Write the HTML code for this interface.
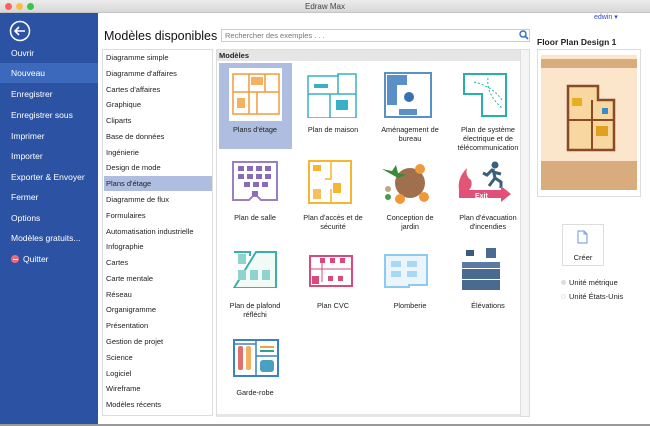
<!DOCTYPE html>
<html><head><meta charset="utf-8"><style>
*{margin:0;padding:0;box-sizing:border-box}
body{width:650px;height:426px;overflow:hidden;background:#fff;font-family:"Liberation Sans",sans-serif;position:relative;color:#222}
.a{position:absolute}
.tb{left:0;top:0;width:650px;height:13px;background:linear-gradient(#ececec,#d8d8d8);border-bottom:1px solid #c4c4c4;font-size:8px;text-align:center;line-height:13px;color:#444}
.dot{top:3px;width:7px;height:7px;border-radius:50%}
.side{left:0;top:13px;width:98px;height:413px;background:#2c53a3}
.si{left:0;width:98px;height:20px;line-height:20px;padding-left:11px;color:#fff;font-size:8.5px}
.cat{left:102px;top:49px;width:111px;height:367px;border:1px solid #ddd}
.ci{left:104px;width:108px;height:15px;line-height:15px;padding-left:2px;font-size:7.5px;color:#222}
.lbl{width:66px;text-align:center;font-size:7.3px;line-height:9px;color:#222}
</style></head><body>
<div class="a tb">Edraw Max</div>
<div class="a dot" style="left:5px;background:#fc605c"></div>
<div class="a dot" style="left:16px;background:#fdbc40"></div>
<div class="a dot" style="left:27px;background:#34c84a"></div>
<div class="a side"></div>
<svg class="a" style="left:9px;top:20px" width="22" height="22"><circle cx="11" cy="11" r="9.5" fill="none" stroke="#fff" stroke-width="1.5"/><path d="M6 11h10M10 7l-4 4 4 4" fill="none" stroke="#fff" stroke-width="1.6"/></svg>
<div class="a si" style="top:43px">Ouvrir</div>
<div class="a si" style="top:63px;background:#3d69bd">Nouveau</div>
<div class="a si" style="top:84px">Enregistrer</div>
<div class="a si" style="top:105px">Enregistrer sous</div>
<div class="a si" style="top:126px">Imprimer</div>
<div class="a si" style="top:146px">Importer</div>
<div class="a si" style="top:167px">Exporter &amp; Envoyer</div>
<div class="a si" style="top:187px">Fermer</div>
<div class="a si" style="top:208px">Options</div>
<div class="a si" style="top:228px">Modèles gratuits...</div>
<div class="a si" style="top:249px;padding-left:23px">Quitter</div>
<div class="a" style="left:11px;top:255px;width:8px;height:8px;border-radius:50%;background:#ea6b7a"><div style="margin:3.5px 1.5px;height:1px;background:#fff"></div></div>
<div class="a" style="left:594px;top:13px;font-size:7px;color:#3345d0">edwin ▾</div>
<div class="a" style="left:104px;top:29px;font-size:12.5px;color:#111">Modèles disponibles</div>
<div class="a" style="left:221px;top:29px;width:309px;height:13px;border:1px solid #ccc;font-size:7.5px;color:#777;padding-left:3px;line-height:11px">Rechercher des exemples . . .</div>
<svg class="a" style="left:519px;top:30px" width="10" height="10"><circle cx="4" cy="4" r="3" fill="none" stroke="#2b6fd0" stroke-width="1.4"/><path d="M6 6l3 3" stroke="#2b6fd0" stroke-width="1.6"/></svg>
<div class="a cat"></div>
<div class="a ci" style="top:50px">Diagramme simple</div>
<div class="a ci" style="top:66px">Diagramme d'affaires</div>
<div class="a ci" style="top:82px">Cartes d'affaires</div>
<div class="a ci" style="top:97px">Graphique</div>
<div class="a ci" style="top:113px">Cliparts</div>
<div class="a ci" style="top:129px">Base de données</div>
<div class="a ci" style="top:145px">Ingénierie</div>
<div class="a ci" style="top:160px">Design de mode</div>
<div class="a ci" style="top:176px;background:#aebde0">Plans d'étage</div>
<div class="a ci" style="top:192px">Diagramme de flux</div>
<div class="a ci" style="top:208px">Formulaires</div>
<div class="a ci" style="top:224px">Automatisation industrielle</div>
<div class="a ci" style="top:239px">Infographie</div>
<div class="a ci" style="top:255px">Cartes</div>
<div class="a ci" style="top:271px">Carte mentale</div>
<div class="a ci" style="top:287px">Réseau</div>
<div class="a ci" style="top:302px">Organigramme</div>
<div class="a ci" style="top:318px">Présentation</div>
<div class="a ci" style="top:334px">Gestion de projet</div>
<div class="a ci" style="top:350px">Science</div>
<div class="a ci" style="top:366px">Logiciel</div>
<div class="a ci" style="top:381px">Wireframe</div>
<div class="a ci" style="top:397px">Modèles récents</div>
<div class="a" style="left:216px;top:49px;width:314px;height:368px;border:1px solid #ddd"></div>
<div class="a" style="left:217px;top:50px;width:303px;height:11px;background:#e6e6e6;font-size:7.5px;font-weight:bold;line-height:11px;padding-left:2px">Modèles</div>
<div class="a" style="left:520px;top:50px;width:9px;height:366px;background:#f4f4f4;border-left:1px solid #e0e0e0"></div>
<div class="a" style="left:217px;top:414px;width:303px;height:3px;background:#e6e6e6"></div>
<div class="a" style="left:219px;top:63px;width:73px;height:86px;background:#aebde0"></div>
<div class="a" style="left:229px;top:68px;width:53px;height:53px;background:#fff"></div>
<svg class="a" style="left:231px;top:72px" width="50" height="44"><g fill="none" stroke="#f29a3c" stroke-width="1.5"><rect x="2" y="2" width="46" height="40"/><path d="M2 20h46M18 2v40M34 2v18M26 20v22"/></g><rect x="20" y="5" width="12" height="8" fill="#f5b060"/><rect x="6" y="26" width="8" height="10" fill="#f5b060"/></svg>
<svg class="a" style="left:306px;top:72px" width="52" height="46"><g fill="none" stroke="#3ab0c8" stroke-width="1.5"><path d="M2 4h30v-2h18v44H2z"/><path d="M2 22h48M24 22v24M32 2v20"/></g><rect x="8" y="12" width="14" height="4" fill="#3ab0c8"/><rect x="30" y="28" width="12" height="10" fill="#3ab0c8"/></svg>
<svg class="a" style="left:383px;top:71px" width="50" height="48"><rect x="2" y="2" width="46" height="44" fill="#fff" stroke="#5a90c6" stroke-width="2"/><path d="M4 4h20v10h-10v20h-10z" fill="#5a90c6"/><circle cx="26" cy="26" r="5" fill="#3a70b0"/><rect x="16" y="38" width="18" height="6" fill="#5a90c6"/></svg>
<svg class="a" style="left:460px;top:72px" width="50" height="46"><path d="M4 2h42v42H22V22H4z" fill="#fff" stroke="#26b0a8" stroke-width="2"/><g fill="none" stroke="#26b0a8" stroke-dasharray="2 2"><path d="M14 10q18 4 28 18M28 6q-2 16 14 30"/></g></svg>
<svg class="a" style="left:231px;top:160px" width="48" height="44"><path d="M2 2h44v38H30l-4-4h-4l-4 4H2z" fill="#fff" stroke="#9b7fc3" stroke-width="2"/><g fill="#8a6bb8"><rect x="7" y="6" width="6" height="5"/><rect x="16" y="6" width="6" height="5"/><rect x="25" y="6" width="6" height="5"/><rect x="34" y="6" width="6" height="5"/><rect x="7" y="14" width="6" height="5"/><rect x="16" y="14" width="6" height="5"/><rect x="25" y="14" width="6" height="5"/><rect x="34" y="14" width="6" height="5"/><rect x="13" y="22" width="6" height="5"/><rect x="22" y="22" width="6" height="5"/><rect x="31" y="22" width="6" height="5"/><rect x="21" y="31" width="6" height="5"/></g></svg>
<svg class="a" style="left:307px;top:159px" width="46" height="46"><rect x="2" y="2" width="42" height="42" fill="#fff" stroke="#f5b630" stroke-width="2"/><path d="M24 2v18h-6M24 30v14" stroke="#f5b630" stroke-width="1.5" fill="none"/><rect x="6" y="6" width="8" height="6" fill="#f5b630"/><rect x="26" y="24" width="8" height="10" fill="#f5b630"/><rect x="6" y="30" width="8" height="10" fill="#f5c060"/></svg>
<svg class="a" style="left:378px;top:161px" width="62" height="44"><circle cx="32" cy="22" r="15" fill="#a0704e"/><circle cx="42" cy="8" r="5" fill="#ef9a3a"/><circle cx="46" cy="36" r="5" fill="#ef9a3a"/><circle cx="22" cy="38" r="5" fill="#ef9a3a"/><path d="M4 8l10 2 4-6 2 8 8 2-8 3" fill="#3a8a3a"/><circle cx="10" cy="28" r="3" fill="#bba888"/><circle cx="10" cy="36" r="3" fill="#4a9a4a"/></svg>
<svg class="a" style="left:455px;top:160px" width="60" height="44"><path d="M4 30q-2-12 8-22q-2 8 4 12q2 6-2 10z" fill="#e25577"/><circle cx="40" cy="5" r="3.5" fill="#3b5f7a"/><path d="M38 9l-6 6 -4-2M38 9l2 9 -6 8M40 18l6 4 0 6M38 12l8 2" stroke="#3b5f7a" stroke-width="3" fill="none"/><path d="M4 30h42v-4l10 8-10 8v-4H4z" fill="#e2507a"/><text x="20" y="38" font-size="7" fill="#fff" font-weight="bold" font-family="Liberation Sans">Exit</text></svg>
<svg class="a" style="left:232px;top:250px" width="46" height="38"><path d="M2 2h16v4M24 2h20v36H2z" fill="#f2faf5" stroke="#3bb0a8" stroke-width="2"/><g fill="#8fd4cc"><rect x="6" y="4" width="8" height="10"/><rect x="6" y="20" width="8" height="10"/><rect x="18" y="20" width="8" height="10"/><rect x="30" y="20" width="8" height="10"/></g></svg>
<svg class="a" style="left:308px;top:254px" width="46" height="34"><rect x="2" y="2" width="42" height="30" fill="#fff" stroke="#d84a7a" stroke-width="2"/><path d="M2 15h42M14 8v20" stroke="#d84a7a"/><g fill="#d84a7a"><rect x="12" y="4" width="5" height="5"/><rect x="22" y="4" width="5" height="5"/><rect x="32" y="4" width="5" height="5"/><rect x="4" y="22" width="7" height="8"/><rect x="20" y="22" width="5" height="5"/><rect x="30" y="22" width="5" height="5"/></g></svg>
<svg class="a" style="left:383px;top:253px" width="46" height="36"><path d="M2 2h42v30H26v2H2z" fill="#eaf5fc" stroke="#8ccaf0" stroke-width="2"/><g fill="#a8d8f4"><rect x="8" y="8" width="10" height="6"/><rect x="24" y="8" width="10" height="6"/><rect x="8" y="18" width="10" height="6"/><rect x="24" y="18" width="10" height="6"/></g></svg>
<svg class="a" style="left:460px;top:248px" width="42" height="44"><rect x="6" y="2" width="8" height="6" fill="#3c5a80"/><rect x="26" y="0" width="10" height="10" fill="#4a6a90"/><rect x="2" y="14" width="38" height="6" fill="#5a7aa4"/><rect x="2" y="21" width="38" height="10" fill="#4a6a90"/><rect x="2" y="32" width="38" height="10" fill="#4a6a90"/></svg>
<svg class="a" style="left:232px;top:338px" width="48" height="40"><rect x="2" y="2" width="44" height="36" fill="#fff" stroke="#3b82c4" stroke-width="2"/><path d="M24 2v36M24 18h22M2 6h22" stroke="#3b82c4" stroke-width="1.5"/><rect x="6" y="8" width="5" height="24" rx="2" fill="#e07070"/><rect x="14" y="8" width="5" height="24" rx="2" fill="#f2b060"/><rect x="28" y="8" width="14" height="2" fill="#f2a040"/><rect x="28" y="12" width="14" height="2" fill="#30a090"/><rect x="28" y="22" width="14" height="12" rx="3" fill="#4aa0c0"/></svg>
<div class="a lbl" style="left:222px;top:125px">Plans d'étage</div>
<div class="a lbl" style="left:300px;top:125px">Plan de maison</div>
<div class="a lbl" style="left:377px;top:125px">Aménagement de bureau</div>
<div class="a lbl" style="left:451px;top:125px;width:74px">Plan de système électrique et de télécommunication</div>
<div class="a lbl" style="left:222px;top:213px">Plan de salle</div>
<div class="a lbl" style="left:300px;top:213px">Plan d'accès et de sécurité</div>
<div class="a lbl" style="left:377px;top:213px">Conception de jardin</div>
<div class="a lbl" style="left:451px;top:213px;width:74px">Plan d'évacuation d'incendies</div>
<div class="a lbl" style="left:222px;top:301px">Plan de plafond réfléchi</div>
<div class="a lbl" style="left:300px;top:301px">Plan CVC</div>
<div class="a lbl" style="left:377px;top:301px">Plomberie</div>
<div class="a lbl" style="left:455px;top:301px">Élévations</div>
<div class="a lbl" style="left:222px;top:388px">Garde-robe</div>
<div class="a" style="left:537px;top:37px;font-size:8.5px;font-weight:bold">Floor Plan Design 1</div>
<div class="a" style="left:537px;top:49px;width:104px;height:148px;border:1px solid #ddd"></div>
<div class="a" style="left:541px;top:55px;width:96px;height:135px;background:#fbe6cc"></div>
<div class="a" style="left:541px;top:59px;width:96px;height:9px;background:#d8ac7c"></div>
<div class="a" style="left:541px;top:161px;width:96px;height:29px;background:#d8ac7c"></div>
<svg class="a" style="left:558px;top:80px" width="66" height="72"><path d="M10 6h30v14h16v50H10z" fill="#f8d8a0" stroke="#8a4a28" stroke-width="2.5"/><path d="M10 40h46M34 20v50" stroke="#8a4a28" stroke-width="2"/><rect x="14" y="18" width="10" height="8" fill="#e8b020"/><rect x="38" y="46" width="12" height="10" fill="#e0a020"/><rect x="44" y="28" width="6" height="6" fill="#3a8ad0"/></svg>
<div class="a" style="left:562px;top:224px;width:42px;height:42px;border:1px solid #ddd;font-size:7.5px;text-align:center;padding-top:28px">Créer</div>
<svg class="a" style="left:577px;top:230px" width="11" height="14"><path d="M1 1h6l3 3v9H1z" fill="#fff" stroke="#6a9ad8"/><path d="M7 1v3h3" fill="none" stroke="#6a9ad8"/></svg>
<div class="a" style="left:561px;top:280px;width:5px;height:5px;border-radius:50%;background:#ddd"></div>
<div class="a" style="left:569px;top:278px;font-size:7.5px">Unité métrique</div>
<div class="a" style="left:561px;top:294px;width:5px;height:5px;border-radius:50%;border:1px solid #e4e4e4"></div>
<div class="a" style="left:569px;top:292px;font-size:7.5px">Unité États-Unis</div>
<div class="a" style="left:0;top:424px;width:650px;height:2px;background:#999"></div>
</body></html>
